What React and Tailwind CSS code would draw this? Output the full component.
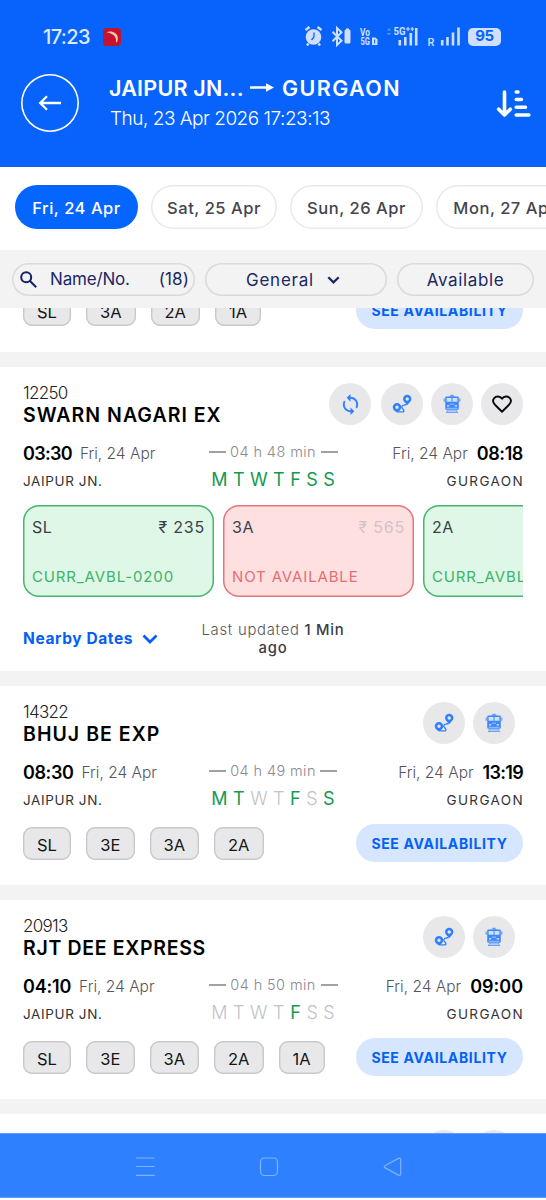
import React from 'react';
import { MdSync } from 'react-icons/md';

const IconCircle = ({ children, className = '' }) => (
  <div className={`flex size-[42px] shrink-0 items-center justify-center rounded-full bg-[#e8e8ea] ${className}`}>{children}</div>
);

const RouteIcon = () => (
  <svg width="20" height="20" viewBox="0 0 20 20" fill="none">
    <path d="M5.500 17.800h5.200c1.900 0 1.300-2-.200-3.300-1.400-1.300-.800-3 1.400-3.300l2.600-.700" stroke="#2f80ff" strokeWidth="1.300" />
    <path fillRule="evenodd" fill="#2f80ff" d="M5 9a4.300 4.300 0 0 1 4.300 4.300c0 2.200-2.300 3.700-3.800 5.300-2.300-.900-4.800-2.900-4.800-5.300A4.300 4.300 0 0 1 5 9zm0 2.500a1.700 1.700 0 1 0 0 3.400 1.700 1.700 0 0 0 0-3.400z" />
    <path fillRule="evenodd" fill="#2f80ff" d="M15.200.800a4.200 4.200 0 0 1 4.200 4.200c0 2.400-2.800 4.200-4.200 6.300-1.400-2.100-4.200-3.900-4.200-6.300A4.200 4.200 0 0 1 15.200.800zm0 2.500a1.700 1.700 0 1 0 0 3.400 1.700 1.700 0 0 0 0-3.400z" />
  </svg>
);

const TrainIcon = () => (
  <svg width="18" height="20" viewBox="0 0 18 20" fill="none">
    <path d="M6.500 2.300h5M7.500 1.200h3" stroke="#5c9afc" strokeWidth="1.100" />
    <path d="M3.500 2.500h11c.800 0 1.300.500 1.300 1.300v10.400c0 1-.600 1.500-1.500 1.500H3.700c-.900 0-1.500-.500-1.500-1.500V3.800c0-.800.500-1.300 1.300-1.300z" fill="#3d88fc" />
    <path d="M3.600 4h4.900v3.800H3.600zM9.500 4h4.900v3.800H9.500z" fill="#cfe0fa" />
    <path d="M1.200 4.500v3.300M16.800 4.500v3.300" stroke="#4c8ff8" />
    <path d="M4 11.200h2.300v1.300H4zM11.700 11.200H14v1.300h-2.300z" fill="#e8e8ea" />
    <path d="M6.800 10.200h4.400M3.600 14.300h10.800" stroke="#a9c8fb" strokeWidth=".900" />
    <path d="M4.800 15.500 3.300 19.200M13.200 15.500l1.500 3.700M4.400 16.900h9.200M3.800 18.500h10.400" stroke="#6ba2f9" strokeWidth="1" />
  </svg>
);

const HeartIcon = () => (
  <svg width="20" height="18" viewBox="0 0 20 18" fill="none" stroke="#0a0a0a" strokeWidth="1.900" strokeLinejoin="round">
    <path d="M10 16.700 3.200 10C.800 7.600.600 4.900 2.200 3.100 4.100.900 8 .700 10 3.700c2-3 5.900-2.800 7.800-.600 1.600 1.800 1.400 4.500-1 6.900z" />
  </svg>
);

const Chevron = ({ className = '', width = 2.2 }) => (
  <svg className={className} viewBox="0 0 16 10" fill="none" stroke="currentColor" strokeWidth={width}>
    <path d="m1.500 1.500 6.500 6.500 6.500-6.500" />
  </svg>
);

const SortIcon = () => (
  <svg width="36" height="28" viewBox="0 0 36 28" fill="none" stroke="#fff" strokeLinecap="round" strokeLinejoin="round">
    <path d="M9.500 2v23M3.700 19.200 9.500 25l5.800-5.800" strokeWidth="3.600" />
    <path d="M21.200 2h1.800M21.200 9.600h5.300M21.200 17.300h9.300M21.200 25h12.700" strokeWidth="3.500" />
  </svg>
);

const StatusIcons = () => (
  <svg width="200" height="24" viewBox="300 25 200 24" fill="none" fontFamily="Roboto, sans-serif">
    <circle cx="313.500" cy="37" r="7.800" fill="#cfe0ff" />
    <path d="m305.500 30 4-3M321.500 30l-4-3M308.500 43.500l-1.500 2M318.500 43.500l1.500 2" stroke="#cfe0ff" strokeWidth="2.400" />
    <path d="M314 32.500V37l-2.500 3" stroke="#0b63fb" strokeWidth="1.300" />
    <path d="m332.500 31.700 9 9-4.500 4.200V28l4.500 4.200-9 9" stroke="#cfe0ff" strokeWidth="2" />
    <rect x="344.500" y="29.500" width="6" height="14" rx="1.500" fill="#cfe0ff" />
    <rect x="346" y="28.500" width="3" height="2" fill="#cfe0ff" />
    <g fill="#cfe0ff" fontWeight="700">
      <text x="360" y="35.500" fontSize="10" textLength="10" lengthAdjust="spacingAndGlyphs">Vo</text>
      <text x="360.500" y="45.300" fontSize="10.500" textLength="9.500" lengthAdjust="spacingAndGlyphs">5G</text>
      <text x="393.500" y="35" fontSize="11" textLength="12" lengthAdjust="spacingAndGlyphs">5G</text>
      <text x="427.500" y="45.500" fontSize="11" fontWeight="500">R</text>
    </g>
    <path d="M372 37.500h3.500l2 2V45H372z" fill="#cfe0ff" />
    <path d="M374.600 39.500v4" stroke="#0b63fb" />
    <path d="M387.500 30.500 389 29l1.500 1.500M387.500 33l1.500 1.500 1.500-1.500" stroke="#5b96fd" strokeWidth="1.200" />
    <path d="M406 29h4M408 27v4M410.500 29h3.500M412.200 27v4" stroke="#cfe0ff" strokeWidth="1.100" />
    <path d="M399.800 45.500V40M405.300 45.500V37M410.800 45.500V33M416.200 45.500V28M442.200 45.500V40M447.500 45.500v-8.500M453 45.500V32.500M458.500 45.500V27.500" stroke="#cfe0ff" strokeWidth="2.600" />
  </svg>
);

const Chip = ({ children, className = 'w-12' }) => (
  <div className={`flex h-[32.500px] items-center justify-center rounded-[9px] bg-[#e8e8ea] pt-[4px] text-[16.500px] leading-none text-[#151515] shadow-[inset_0_0_0_1.4px_#c9c9cb] ${className}`}>
    {children}
  </div>
);

const chipWidths = { SL: 'w-12', '3E': 'w-[48.500px]', '3A': 'w-[49.500px]', '2A': 'w-[49.500px]', '1A': 'w-[46px]' };
const Chips = ({ items }) => (
  <div className="flex gap-[15px]">
    {items.map((c) => <Chip key={c} className={chipWidths[c]}>{c}</Chip>)}
  </div>
);

const SeeButton = () => (
  <button className="h-[38px] w-[167px] rounded-full bg-[#d6e6fe] pt-[2px] text-[14px] font-bold leading-none tracking-[0.660px] whitespace-nowrap text-[#0560f5]">
    SEE AVAILABILITY
  </button>
);

const Days = ({ active }) => (
  <div className="flex w-[123.500px] justify-between text-[18px] leading-[20px]">
    {'MTWTFSS'.split('').map((d, i) => (
      <span key={i} className={active[i] === '1' ? 'text-[#15994d]' : 'font-light text-[#c2c2c6]'}>{d}</span>
    ))}
  </div>
);

function TrainCard({ number, name, nameClass, dep, depClass, arr, arrClass, duration, days, icons, children }) {
  return (
    <section className="bg-white px-[23px] pt-4">
      <div className="flex h-[43px] justify-between">
        <div>
          <div className="h-5 text-[17px] font-light leading-5 tracking-[-0.700px] text-[#222]">{number}</div>
          <div className={`h-6 whitespace-nowrap text-[19.500px] font-semibold leading-6 text-black ${nameClass}`}>{name}</div>
        </div>
        {icons}
      </div>
      <div className="mt-[16px] flex justify-between">
        <div className="w-[170px]">
          <div className="-mt-px flex h-6 items-center whitespace-nowrap">
            <span className={`text-[18px] font-semibold text-black ${depClass}`}>{dep}</span>
            <span className="ml-[8px] pt-[2px] text-[15.500px] font-light text-[#55555b]">Fri, 24 Apr</span>
          </div>
          <div className="mt-[6px] text-[13.500px] leading-[20px] tracking-[0.620px] text-[#333]">JAIPUR JN.</div>
        </div>
        <div className="flex w-[129px] flex-col items-center">
          <div className="flex h-[20px] w-full items-center justify-between">
            <span className="h-[2px] w-[17px] bg-[#a0a0a8]" />
            <span className="whitespace-nowrap text-[14.500px] font-light tracking-[0.400px] text-[#8a8a90]">{duration}</span>
            <span className="h-[2px] w-[17px] bg-[#a0a0a8]" />
          </div>
          <div className="mt-[8px]"><Days active={days} /></div>
        </div>
        <div className="flex w-[170px] flex-col items-end">
          <div className="-mt-px flex h-6 items-center whitespace-nowrap">
            <span className="mr-[9px] pt-[2px] text-[15.500px] font-light text-[#55555b]">Fri, 24 Apr</span>
            <span className={`text-[18px] font-semibold text-black ${arrClass}`}>{arr}</span>
          </div>
          <div className="-mr-[1px] mt-[6px] text-[13.500px] leading-[20px] tracking-[1.370px] text-[#333]">GURGAON</div>
        </div>
      </div>
      {children}
    </section>
  );
}

const ClassCard = ({ tone, cls, fare, status }) => {
  const green = tone === 'green';
  return (
    <div className={`flex h-[91.500px] w-[191px] shrink-0 flex-col justify-between rounded-[16px] px-[9px] pt-[12px] pb-[10px] ${green ? 'bg-[#def7e6] shadow-[inset_0_0_0_1.5px_#46b56f]' : 'bg-[#fee0e1] shadow-[inset_0_0_0_1.5px_#e4777a]'}`}>
      <div className="flex justify-between text-[16px] leading-5 text-[#3a3f47]">
        <span className="tracking-[0.500px]">{cls}</span>
        <span className={`tracking-[0.800px] ${green ? '' : 'text-[#d3c3c7]'}`}>{fare}</span>
      </div>
      <div className={`whitespace-nowrap text-[15px] leading-5 tracking-[0.860px] ${green ? 'text-[#40b36a]' : 'text-[#e66e71]'}`}>{status}</div>
    </div>
  );
};

const Strip = () => <div className="h-[15px] shrink-0 bg-[#f3f3f3]" />;

const dates = [
  ['Fri, 24 Apr', 'w-[123px] bg-[#0565ff] text-white'],
  ['Sat, 25 Apr', 'w-[126px] text-[#44444c] shadow-[inset_0_0_0_1.5px_#e9e9eb]'],
  ['Sun, 26 Apr', 'w-[133px] text-[#44444c] shadow-[inset_0_0_0_1.5px_#e9e9eb]'],
  ['Mon, 27 Apr', 'w-[137px] text-[#44444c] shadow-[inset_0_0_0_1.5px_#e9e9eb]'],
];

const smallIcons = (
  <div className="mr-[8px] flex gap-[8px]">
    <IconCircle><RouteIcon /></IconCircle>
    <IconCircle><TrainIcon /></IconCircle>
  </div>
);

export default function App() {
  return (
    <div className="flex h-[1200px] w-[546px] flex-col overflow-hidden bg-white font-['Inter',sans-serif]">
      <header className="h-[167px] shrink-0 bg-[#0763fb]">
        <div className="flex h-[73px] items-center pr-[45px] pl-[43px]">
          <span className="text-[20px] font-medium tracking-[-0.600px] text-[#dce9ff]">17:23</span>
          <svg className="ml-[13px]" width="18" height="18" viewBox="0 0 18 18">
            <rect width="18" height="18" rx="4" fill="#c4122f" />
            <path d="M3.500 4.300c5-2 11 .500 11.300 5.500.1 2.200-.400 3.800-1.300 5-.300-.600-.400-.900-.600-1.300.900-4.500-3-8.200-9.400-9.200z" fill="#f6c9a0" />
          </svg>
          <div className="ml-auto flex items-center">
            <StatusIcons />
            <span className="-ml-[32px] flex h-[18px] w-[33px] items-center justify-center rounded-[5px] bg-[#cfe0ff] text-[15px] font-bold tracking-[-0.300px] text-[#0b63fb]">95</span>
          </div>
        </div>
        <div className="flex pr-[15px] pl-[21px]">
          <div className="mt-px flex size-[58px] items-center justify-center rounded-full shadow-[inset_0_0_0_1.6px_white]">
            <svg width="24" height="16" viewBox="0 0 24 16" fill="none" stroke="#fff" strokeWidth="2.300">
              <path d="M23 8H2.500M9 1.200 2.200 8 9 14.800" />
            </svg>
          </div>
          <div className="ml-[30px] pt-[2px] text-white">
            <div className="flex h-[26px] items-center whitespace-nowrap text-[21.500px] font-semibold">
              <span className="w-[135px] tracking-[0.220px]">JAIPUR JN...</span>
              <svg className="mr-[7px] ml-[5px]" width="26" height="12" viewBox="0 0 26 12">
                <path d="M1 4.200h16V1.200L25 5.500l-8 4.300V6.800H1z" fill="#fff" />
              </svg>
              <span className="tracking-[1.400px]">GURGAON</span>
            </div>
            <div className="mt-[5px] ml-px whitespace-nowrap text-[19px] font-light leading-[26px] tracking-[-0.490px]">Thu, 23 Apr 2026 17:23:13</div>
          </div>
          <div className="mt-[17px] ml-auto"><SortIcon /></div>
        </div>
      </header>

      <nav className="flex h-[83px] shrink-0 gap-[13px] overflow-hidden pt-[18px] pl-[15px]">
        {dates.map(([d, cls]) => (
          <div key={d} className={`flex h-[44px] shrink-0 items-center justify-center rounded-full pt-[2px] text-[16.500px] font-medium tracking-[0.530px] whitespace-nowrap ${cls}`}>{d}</div>
        ))}
      </nav>

      <div className="flex h-[58px] shrink-0 gap-[10px] bg-[#f3f3f3] pt-[13px] pl-[12px] text-[17px] text-[#1c2766]">
        <div className="flex h-[33px] w-[183px] items-center rounded-full pr-[6px] pl-[8px] shadow-[inset_0_0_0_1.5px_#dadadc]">
          <svg width="17" height="17" viewBox="0 0 17 17" fill="none" stroke="#15206b" strokeWidth="2">
            <circle cx="6.200" cy="6.200" r="5" />
            <path d="m10 10 6.200 6.200" />
          </svg>
          <span className="ml-[13px] tracking-[-0.180px]">Name/No.</span>
          <span className="ml-auto tracking-[0.100px]">(18)</span>
        </div>
        <div className="flex h-[33px] w-[182px] items-center rounded-full pt-[3px] pl-[41px] tracking-[0.750px] shadow-[inset_0_0_0_1.5px_#dadadc]">
          General <Chevron className="mb-[3px] ml-[13px] h-[8px] w-[13px]" width={2.800} />
        </div>
        <div className="flex h-[33px] w-[137px] items-center justify-center rounded-full pt-[3px] tracking-[0.640px] shadow-[inset_0_0_0_1.5px_#dadadc]">Available</div>
      </div>

      <div className="flex h-[44px] shrink-0 items-end justify-between overflow-hidden px-[23px] pb-[23px]">
        <div className="mb-[3px]"><Chips items={['SL', '3A', '2A', '1A']} /></div>
        <SeeButton />
      </div>
      <Strip />

      <TrainCard
        number="12250" name="SWARN NAGARI EX" nameClass="tracking-[1.030px]"
        dep="03:30" depClass="tracking-[-0.700px]" arr="08:18" arrClass="tracking-[-0.400px]"
        duration="04 h 48 min" days="1111111"
        icons={
          <div className="flex gap-[8px]">
            <IconCircle className="mr-[2px]"><MdSync size={23} color="#2f80ff" /></IconCircle>
            <IconCircle><RouteIcon /></IconCircle>
            <IconCircle><TrainIcon /></IconCircle>
            <IconCircle><HeartIcon /></IconCircle>
          </div>
        }
      >
        <div className="mt-[14px] flex gap-[9px] overflow-hidden">
          <ClassCard tone="green" cls="SL" fare="₹ 235" status="CURR_AVBL-0200" />
          <ClassCard tone="red" cls="3A" fare="₹ 565" status="NOT AVAILABLE" />
          <ClassCard tone="green" cls="2A" fare="₹ 890" status="CURR_AVBL-0012" />
        </div>
        <div className="flex h-[74.500px] pt-[24px]">
          <div className="flex h-[36px] w-[165px] items-center pt-px text-[15.500px] font-bold tracking-[0.600px] text-[#0560f5]">
            Nearby Dates <Chevron className="ml-[9px] h-[10px] w-[16px]" width={2.800} />
          </div>
          <div className="w-[170px] text-center text-[14.800px] font-light leading-[18px] tracking-[0.750px] text-[#55555b]">
            Last updated <span className="font-medium text-[#3c3c44]">1 Min<br />ago</span>
          </div>
        </div>
      </TrainCard>
      <Strip />

      <TrainCard
        number="14322" name="BHUJ BE EXP" nameClass="tracking-[1.040px]"
        dep="08:30" depClass="tracking-[-0.400px]" arr="13:19" arrClass="tracking-[-0.700px]"
        duration="04 h 49 min" days="1100101" icons={smallIcons}
      >
        <div className="flex h-[75px] items-start justify-between pt-[14px]">
          <div className="mt-[3px]"><Chips items={['SL', '3E', '3A', '2A']} /></div>
          <SeeButton />
        </div>
      </TrainCard>
      <Strip />

      <TrainCard
        number="20913" name="RJT DEE EXPRESS" nameClass="tracking-[0.680px]"
        dep="04:10" depClass="tracking-[-0.200px]" arr="09:00" arrClass="tracking-[0px]"
        duration="04 h 50 min" days="0000100" icons={smallIcons}
      >
        <div className="flex h-[75px] items-start justify-between pt-[14px]">
          <div className="mt-[3px]"><Chips items={['SL', '3E', '3A', '2A', '1A']} /></div>
          <SeeButton />
        </div>
      </TrainCard>
      <Strip />

      <div className="flex h-[19px] shrink-0 items-start justify-end gap-[8px] overflow-hidden pt-4 pr-[31px]">
        <IconCircle /><IconCircle />
      </div>

      <footer className="h-[65px] shrink-0 border-y border-[#5c9dff] bg-[#2f80ff]">
        <svg width="546" height="63" viewBox="0 0 546 63" fill="none" stroke="#7fb2ff" strokeWidth="1.200">
          <path d="M136 24h18.500M136 32.500h18.500M136 41.300h18.500" />
          <rect x="260.500" y="24" width="17" height="17.500" rx="4" />
          <path d="M398.500 24.400 385.200 31.500c-1.200.700-1.200 1.700 0 2.400l13.300 7.200c1.400.700 2.200.200 2.200-1.200V25.500c0-1.300-.900-1.800-2.200-1.100z" />
        </svg>
      </footer>
    </div>
  );
}
